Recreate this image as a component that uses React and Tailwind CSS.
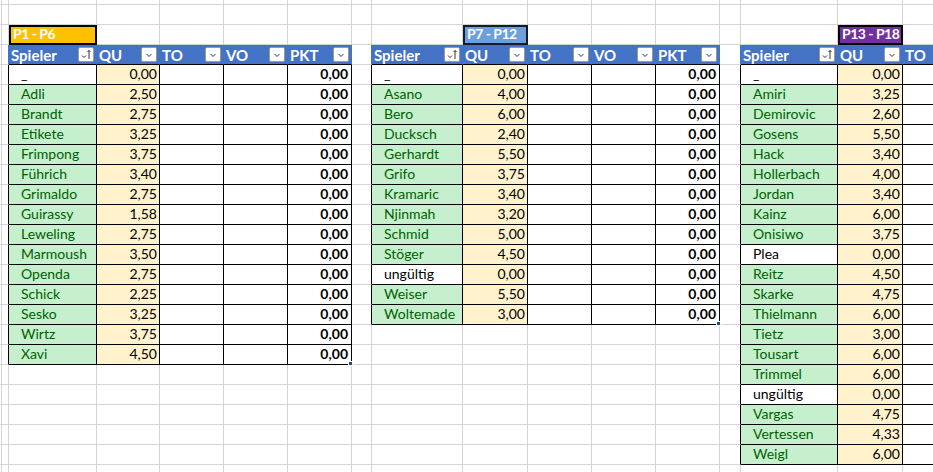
import React from 'react';

// column widths incl. right gridline pixel
const colWidths = 'grid-cols-[2px_7px_88px_63px_64px_64px_64px_20px_91px_65px_64px_64px_64px_21px_97px_65px_64px]';
const rowHeights = 'grid-rows-[5px_repeat(24,20px)]';

const HEADS = ['Spieler', 'QU', 'TO', 'VO', 'PKT'];

const tables = [
  {
    start: 2,
    ncols: 5,
    label: 'P1 - P6',
    labelCol: 2,
    labelClass: 'bg-[#ffc000] border-black',
    rows: [
      ['_', '0,00', true], ['Adli', '2,50'], ['Brandt', '2,75'], ['Etikete', '3,25'],
      ['Frimpong', '3,75'], ['Führich', '3,40'], ['Grimaldo', '2,75'], ['Guirassy', '1,58'],
      ['Leweling', '2,75'], ['Marmoush', '3,50'], ['Openda', '2,75'], ['Schick', '2,25'],
      ['Sesko', '3,25'], ['Wirtz', '3,75'], ['Xavi', '4,50'],
    ],
  },
  {
    start: 8,
    ncols: 5,
    label: 'P7 - P12',
    labelCol: 9,
    labelClass: 'bg-[#6c9fdc] border-[#141c26]',
    rows: [
      ['_', '0,00', true], ['Asano', '4,00'], ['Bero', '6,00'], ['Ducksch', '2,40'],
      ['Gerhardt', '5,50'], ['Grifo', '3,75'], ['Kramaric', '3,40'], ['Njinmah', '3,20'],
      ['Schmid', '5,00'], ['Stöger', '4,50'], ['ungültig', '0,00', true], ['Weiser', '5,50'],
      ['Woltemade', '3,00'],
    ],
  },
  {
    start: 14,
    ncols: 3,
    label: 'P13 - P18',
    labelCol: 15,
    labelClass: 'bg-[#7030a0] border-black',
    rows: [
      ['_', '0,00', true], ['Amiri', '3,25'], ['Demirovic', '2,60'], ['Gosens', '5,50'],
      ['Hack', '3,40'], ['Hollerbach', '4,00'], ['Jordan', '3,40'], ['Kainz', '6,00'],
      ['Onisiwo', '3,75'], ['Plea', '0,00', true], ['Reitz', '4,50'], ['Skarke', '4,75'],
      ['Thielmann', '6,00'], ['Tietz', '3,00'], ['Tousart', '6,00'], ['Trimmel', '6,00'],
      ['ungültig', '0,00', true], ['Vargas', '4,75'], ['Vertessen', '4,33'], ['Weigl', '6,00'],
    ],
  },
];

const FilterButton = ({ sort }) => (
  <div className="w-[16px] h-[15px] shrink-0 bg-white border border-[#9a9a9a] rounded-[2px] flex items-center justify-center">
    {sort ? (
      <svg width="12" height="11" viewBox="0 0 12 11" fill="none" stroke="#333" strokeWidth="1">
        <path d="M2 6.5 L4 8.5 L6 6.5" />
        <path d="M9 1.5 V10" />
        <path d="M7.5 3 L9 1.5 L10.5 3" />
      </svg>
    ) : (
      <svg width="10" height="10" viewBox="0 0 10 10" fill="none" stroke="#333" strokeWidth="1">
        <path d="M2.5 4 L5 6.5 L7.5 4" />
      </svg>
    )}
  </div>
);

function cellFor(r, c) {
  let cls = 'border-r border-b border-[#d4d4d4]';
  let content = null;

  for (const t of tables) {
    const inCols = c >= t.start && c < t.start + t.ncols;
    const ci = c - t.start;
    const n = t.rows.length;
    const isData = r >= 4 && r < 4 + n;

    if (r === 2 && c === t.labelCol) {
      cls = `border-2 ${t.labelClass} text-white font-bold text-[14px] tracking-[-0.5px] pl-[2px] flex items-end pb-[1px] leading-[16px] overflow-hidden`;
      content = t.label;
    }
    if (r === 3 && inCols) {
      cls = 'border-r border-b border-r-[#4472c4] border-b-black bg-[#4472c4] text-white font-bold text-[15px] flex items-center justify-between pl-[2px] pr-[2px]';
      content = (
        <>
          <span className="pt-[1px]">{HEADS[ci]}</span>
          {ci < t.ncols - 1 || t.ncols === 5 ? <FilterButton sort={ci === 0} /> : null}
        </>
      );
    }
    if (r === 3 && c === t.start - 1) {
      cls = 'border-r border-b border-r-[#4472c4] border-b-[#d4d4d4]';
    }
    if (isData && c === t.start - 1) {
      cls = 'border-r border-b border-r-black border-b-[#d4d4d4]';
    }
    if (isData && inCols) {
      const [name, qu, plain] = t.rows[r - 4];
      const last = r - 4 === n - 1 && ci === 4;
      if (ci === 0) {
        cls = `border-r border-b border-black flex items-end pb-[1px] pl-[12px] ${plain ? 'bg-white text-black' : 'bg-[#c6efce] text-[#006100]'}`;
        content = name;
      } else if (ci === 1) {
        cls = 'border-r border-b border-black bg-[#fff2cc] text-black flex items-end justify-end pb-[1px] pr-[2px]';
        content = qu;
      } else if (ci === 4) {
        cls = 'relative border-r border-b border-black bg-white text-black font-bold flex items-end justify-end pb-[1px] pr-[3px]';
        content = (
          <>
            0,00
            {last && <span className="absolute right-[-2px] bottom-[-2px] w-[5px] h-[5px] bg-[#1f4e79] border border-white" />}
          </>
        );
      } else {
        cls = 'border-r border-b border-black bg-white';
      }
    }
  }
  return { cls, content };
}

export default function App() {
  const cells = [];
  for (let r = 0; r < 25; r++) {
    for (let c = 0; c < 17; c++) {
      const { cls, content } = cellFor(r, c);
      cells.push(
        <div key={`${r}-${c}`} className={`min-w-0 overflow-visible whitespace-nowrap ${cls}`}>
          {content}
        </div>
      );
    }
  }

  return (
    <div className="w-[933px] h-[472px] overflow-hidden bg-white">
      <div
        className={`grid ${colWidths} ${rowHeights} text-[14px] leading-[18px]`}
        style={{ fontFamily: 'Lato, "Liberation Sans", sans-serif' }}
      >
        {cells}
      </div>
    </div>
  );
}
